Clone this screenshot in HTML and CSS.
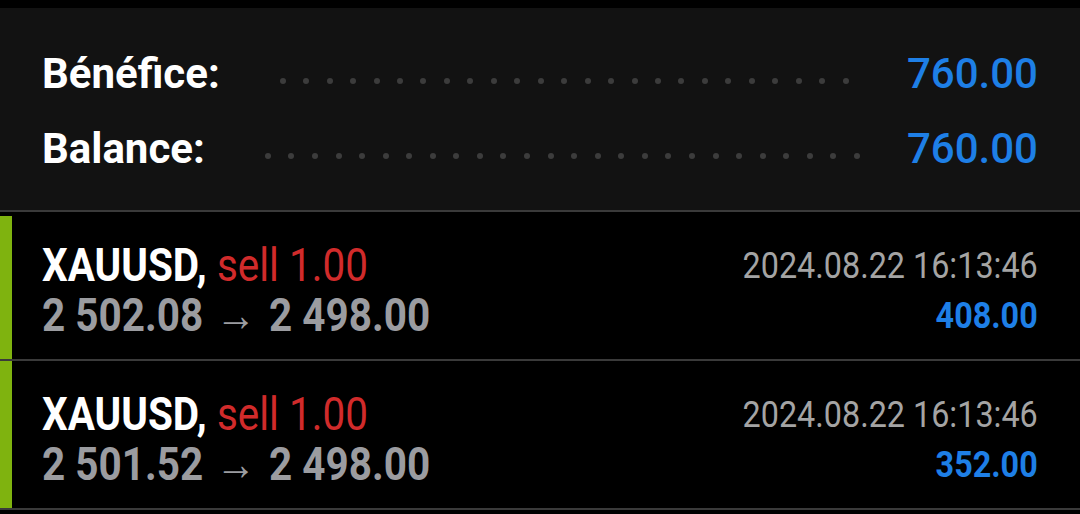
FILE: index.html
```html
<!DOCTYPE html>
<html lang="fr">
<head>
<meta charset="utf-8">
<title>Historique</title>
<link rel="stylesheet" href="styles.css">
</head>
<body>
<div class="topbar"></div>
<section class="summary">
  <div class="sum-row">
    <span class="sum-label">Bénéfice:</span>
    <span class="leader leader-a">
      <i></i><i></i><i></i><i></i><i></i><i></i><i></i><i></i><i></i><i></i><i></i><i></i><i></i><i></i><i></i><i></i><i></i><i></i><i></i><i></i><i></i><i></i><i></i><i></i><i></i>
    </span>
    <span class="sum-value">760.00</span>
  </div>
  <div class="sum-row">
    <span class="sum-label">Balance:</span>
    <span class="leader leader-b">
      <i></i><i></i><i></i><i></i><i></i><i></i><i></i><i></i><i></i><i></i><i></i><i></i><i></i><i></i><i></i><i></i><i></i><i></i><i></i><i></i><i></i><i></i><i></i><i></i><i></i><i></i>
    </span>
    <span class="sum-value">760.00</span>
  </div>
</section>
<section class="trades">
  <div class="trade trade-first">
    <div class="marker"></div>
    <div class="trade-body">
      <div class="trade-left">
        <div class="line1"><span class="sym">XAUUSD,</span> <span class="side">sell 1.00</span></div>
        <div class="line2">2 502.08 <span class="arrow">→</span> 2 498.00</div>
      </div>
      <div class="trade-right">
        <div class="date">2024.08.22 16:13:46</div>
        <div class="profit">408.00</div>
      </div>
    </div>
  </div>
  <div class="trade">
    <div class="marker"></div>
    <div class="trade-body">
      <div class="trade-left">
        <div class="line1"><span class="sym">XAUUSD,</span> <span class="side">sell 1.00</span></div>
        <div class="line2">2 501.52 <span class="arrow">→</span> 2 498.00</div>
      </div>
      <div class="trade-right">
        <div class="date">2024.08.22 16:13:46</div>
        <div class="profit">352.00</div>
      </div>
    </div>
  </div>
</section>
</body>
</html>
```
FILE: styles.css
```css
* { box-sizing: border-box; }
html, body { margin: 0; padding: 0; }
body {
  width: 1080px;
  height: 514px;
  overflow: hidden;
  background: #000;
  font-family: Roboto, "Liberation Sans", sans-serif;
  color: #fff;
}
.topbar { height: 8px; background: #000; }
.summary {
  background: #121212;
  padding: 28px 42px 24px 42px;
  border-bottom: 2px solid #3a3a3a;
}
.sum-row {
  display: flex;
  height: 75px;
  line-height: 75px;
  font-size: 42px;
}
.sum-label { font-weight: 700; color: #fff; }
.sum-value { font-weight: 500; color: #1e7fe6; margin-left: auto; }
.leader {
  flex: 1;
  display: flex;
  justify-content: space-between;
  align-items: center;
  padding-top: 14px;
  margin-left: 61px;
}
.leader i {
  display: block;
  width: 6px;
  height: 6px;
  border-radius: 50%;
  background: #3c3c3c;
}
.leader-a { margin-left: 60px; margin-right: 58px; }
.leader-b { margin-left: 60px; margin-right: 47px; }

.trade {
  display: flex;
  height: 149px;
  border-bottom: 2px solid #3a3a3a;
}
.marker {
  width: 12px;
  flex: none;
  background: #7fb30f;
}
.trade-first .marker { margin-top: 4px; }
.trade-body {
  flex: 1;
  display: flex;
  justify-content: space-between;
  padding: 28px 42px 0 30px;
}
.trade-left {
  transform: scaleX(0.88);
  transform-origin: left top;
  font-size: 46px;
  line-height: 50px;
  white-space: nowrap;
}
.sym { font-weight: 700; color: #fff; }
.side { font-weight: 400; color: #d12b2b; }
.line2 { font-weight: 700; color: #9b9ca0; }
.arrow { font-weight: 400; margin: 0 3px; }
.trade-right {
  transform: scaleX(0.874);
  transform-origin: right top;
  text-align: right;
  white-space: nowrap;
  padding-top: 1px;
}
.date {
  font-size: 37px;
  line-height: 50px;
  color: #a4a4a4;
}
.profit {
  font-size: 37px;
  line-height: 50px;
  font-weight: 700;
  color: #1e7fe6;
}
```
